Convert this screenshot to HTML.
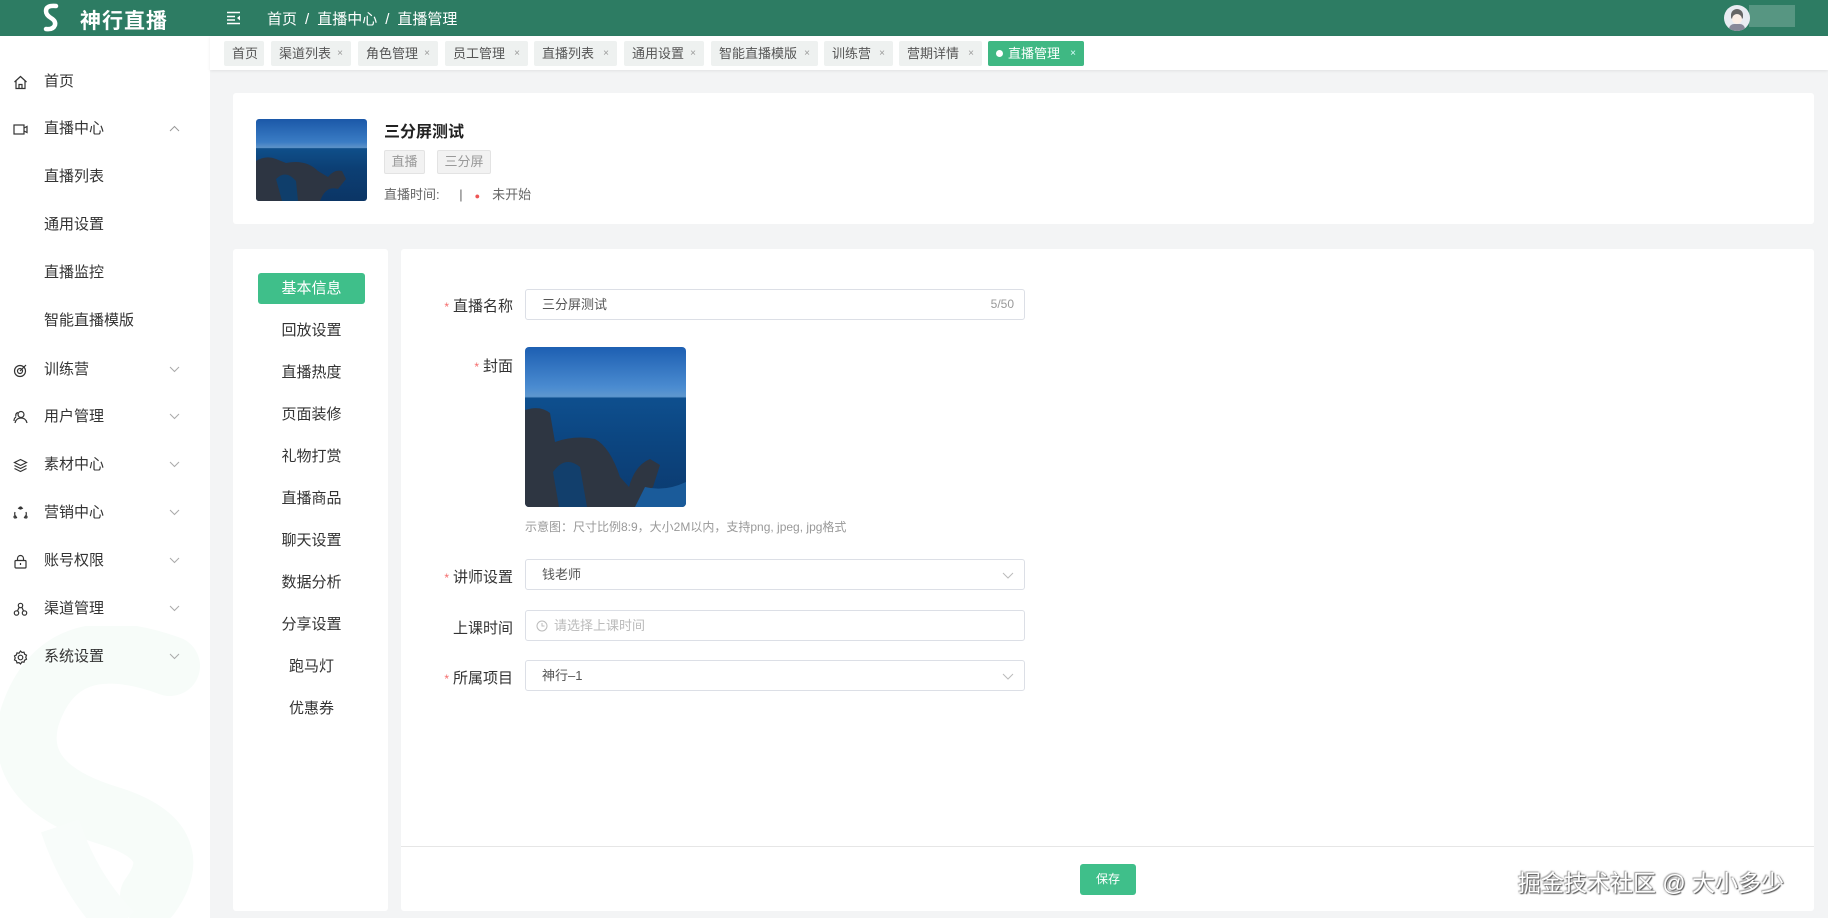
<!DOCTYPE html>
<html><head><meta charset="utf-8">
<style>
*{margin:0;padding:0;box-sizing:border-box}
body{width:1828px;height:918px;overflow:hidden;background:#f3f4f5;font-family:"Liberation Sans","Noto Sans CJK SC",sans-serif;color:#333;position:relative}
.hdr{position:absolute;left:0;top:0;width:1828px;height:36px;background:#2d7c63;color:#fff}
.logo{position:absolute;left:42px;top:3px}
.brand{position:absolute;left:80px;top:5px;font-size:21px;font-weight:bold;letter-spacing:1px}
.bc{position:absolute;left:267px;top:8px;font-size:15px}
.bc span{margin:0 8px}
.side{position:absolute;left:0;top:36px;width:210px;height:882px;background:#fff;overflow:hidden}
.mi{position:absolute;left:0;width:210px;height:24px;font-size:15px;color:#333}
.mi .t{position:absolute;left:44px;top:0;line-height:24px}
.mi svg.ic{position:absolute;left:13px;top:5px}
.mi .ch{position:absolute;left:169px;top:8px}
.tabs{position:absolute;left:210px;top:36px;width:1618px;height:34px;background:#fff;box-shadow:0 1px 3px rgba(0,0,0,.08)}
.tab{position:absolute;top:5px;height:25px;background:#eef1f0;font-size:13px;color:#555;line-height:25px;padding-left:8px;border-radius:2px}
.tab i{font-style:normal;font-size:10px;color:#999;position:absolute;right:8px}
.tab.on{background:#3fb883;color:#fff}
.tab.on i{color:#dff}
.card{position:absolute;background:#fff;border-radius:3px}
.tag{position:absolute;top:150px;height:24px;background:#f2f2f2;border:1px solid #e3e3e3;border-radius:2px;font-size:13px;color:#999;line-height:22px;text-align:center}
.nv{position:absolute;left:258px;width:107px;text-align:center;font-size:15px;color:#333;line-height:31px;height:31px}
.nv.on{background:#3fbf8a;color:#fff;border-radius:3px}
.lab{position:absolute;width:110px;left:403px;text-align:right;font-size:15px;color:#333}
.lab b{color:#f56c6c;font-weight:normal;margin-right:4px;font-size:12px}
.inp{position:absolute;left:525px;width:500px;height:31px;border:1px solid #dcdfe6;border-radius:3px;font-size:13px;color:#555;line-height:29px;padding-left:16px}
.pic{background:linear-gradient(180deg,#1b58a8 0%,#3a7cc4 28%,#5d93c8 35%,#0f4f8a 36%,#0c3f74 60%,#0b3565 100%);overflow:hidden;position:relative}
</style></head><body>
<div class="hdr">
 <svg class="logo" width="18" height="30" viewBox="0 0 18 30"><path d="M14 3 Q4 2 4 8 Q4 12 9 15 Q14 18 13 22 Q11 27 4 26" stroke="#fff" stroke-width="4.5" fill="none" stroke-linecap="round"/></svg>
 <div class="brand">神行直播</div>
 <svg style="position:absolute;left:226px;top:11px" width="16" height="14" viewBox="0 0 16 14"><path d="M1 1.5h13M1 5.5h8M1 9h8M1 12.5h13" stroke="#fff" stroke-width="1.4"/><path d="M14 4.5l-3 2.5 3 2.5z" fill="#fff"/></svg>
 <div class="bc">首页<span>/</span>直播中心<span>/</span>直播管理</div>
 <div style="position:absolute;left:1724px;top:5px;width:26px;height:26px;border-radius:50%;background:#e8ecf2;overflow:hidden"><div style="position:absolute;left:7px;top:4px;width:12px;height:10px;border-radius:6px 6px 2px 2px;background:#666"></div><div style="position:absolute;left:8px;top:9px;width:10px;height:10px;border-radius:50%;background:#fbeee6"></div><div style="position:absolute;left:5px;top:19px;width:16px;height:10px;border-radius:5px;background:#889"></div></div>
 <div style="position:absolute;left:1749px;top:5px;width:46px;height:22px;background:rgba(255,255,255,.2)"></div>
</div>

<div class="side">
 <svg style="position:absolute;left:0;top:590px" width="210" height="300" viewBox="0 0 210 300"><path d="M170 40 Q60 0 30 90 Q10 160 110 190 Q190 215 150 270" stroke="#f7fcf9" stroke-width="60" fill="none" stroke-linecap="round"/><path d="M60 200 Q80 260 120 300" stroke="#f8fcfa" stroke-width="40" fill="none"/></svg>
 <div class="mi" style="top:34px"><svg class="ic" width="15" height="15" viewBox="0 0 15 15" fill="none" stroke="#333" stroke-width="1.2"><path d="M1.5 7 7.5 1.5 13.5 7M3 6v7.5h9V6M6 13.5v-4h3v4"/></svg><span class="t">首页</span></div>
 <div class="mi" style="top:81px"><svg class="ic" width="15" height="15" viewBox="0 0 15 15" fill="none" stroke="#333" stroke-width="1.2"><rect x="1" y="3" width="10" height="9"/><path d="M11 6l3-1.5v6L11 9"/></svg><span class="t">直播中心</span><svg class="ch" width="11" height="7" viewBox="0 0 11 7"><path d="M1 6l4.5-4.5L10 6" stroke="#999" fill="none"/></svg></div>
 <div class="mi" style="top:129px"><span class="t">直播列表</span></div>
 <div class="mi" style="top:177px"><span class="t">通用设置</span></div>
 <div class="mi" style="top:225px"><span class="t">直播监控</span></div>
 <div class="mi" style="top:273px"><span class="t">智能直播模版</span></div>
 <div class="mi" style="top:322px"><svg class="ic" width="15" height="15" viewBox="0 0 15 15" fill="none" stroke="#333" stroke-width="1.2"><circle cx="7" cy="8" r="5.5"/><circle cx="7" cy="8" r="2.5"/><path d="M7 8l6-6"/></svg><span class="t">训练营</span><svg class="ch" width="11" height="7" viewBox="0 0 11 7"><path d="M1 1l4.5 4.5L10 1" stroke="#aaa" fill="none"/></svg></div>
 <div class="mi" style="top:369px"><svg class="ic" width="15" height="15" viewBox="0 0 15 15" fill="none" stroke="#333" stroke-width="1.2"><circle cx="8" cy="4.5" r="3"/><path d="M2 13q1-5 6-5t6 5M5 2.5q-3 1-2 4M1 11q0-3 2-4"/></svg><span class="t">用户管理</span><svg class="ch" width="11" height="7" viewBox="0 0 11 7"><path d="M1 1l4.5 4.5L10 1" stroke="#aaa" fill="none"/></svg></div>
 <div class="mi" style="top:417px"><svg class="ic" width="15" height="15" viewBox="0 0 15 15" fill="none" stroke="#333" stroke-width="1.2"><path d="M7.5 1.5l6 3-6 3-6-3zM1.5 7.5l6 3 6-3M1.5 10.5l6 3 6-3"/></svg><span class="t">素材中心</span><svg class="ch" width="11" height="7" viewBox="0 0 11 7"><path d="M1 1l4.5 4.5L10 1" stroke="#aaa" fill="none"/></svg></div>
 <div class="mi" style="top:465px"><svg class="ic" width="15" height="15" viewBox="0 0 15 15" fill="none" stroke="#333" stroke-width="1.2"><path d="M5 2.5a5.5 5.5 0 0 1 5 0M13 6a5.5 5.5 0 0 1-2 6M4 12a5.5 5.5 0 0 1-2-6"/><circle cx="7.5" cy="2" r="1"/><circle cx="2" cy="11" r="1"/><circle cx="13" cy="11" r="1"/></svg><span class="t">营销中心</span><svg class="ch" width="11" height="7" viewBox="0 0 11 7"><path d="M1 1l4.5 4.5L10 1" stroke="#aaa" fill="none"/></svg></div>
 <div class="mi" style="top:513px"><svg class="ic" width="15" height="15" viewBox="0 0 15 15" fill="none" stroke="#333" stroke-width="1.2"><rect x="2" y="6.5" width="11" height="7.5" rx="1"/><path d="M4.5 6.5V4.5a3 3 0 0 1 6 0v2M7.5 9v2"/></svg><span class="t">账号权限</span><svg class="ch" width="11" height="7" viewBox="0 0 11 7"><path d="M1 1l4.5 4.5L10 1" stroke="#aaa" fill="none"/></svg></div>
 <div class="mi" style="top:561px"><svg class="ic" width="15" height="15" viewBox="0 0 15 15" fill="none" stroke="#333" stroke-width="1.2"><circle cx="7.5" cy="3.5" r="2.2"/><circle cx="3.5" cy="11" r="2.2"/><circle cx="11.5" cy="11" r="2.2"/><path d="M6 5.5 4.5 9M9 5.5l1.5 3.5"/></svg><span class="t">渠道管理</span><svg class="ch" width="11" height="7" viewBox="0 0 11 7"><path d="M1 1l4.5 4.5L10 1" stroke="#aaa" fill="none"/></svg></div>
 <div class="mi" style="top:609px"><svg class="ic" width="15" height="15" viewBox="0 0 15 15" fill="none" stroke="#333" stroke-width="1.2"><path d="M7.5 1l1.5 1.5 2-.3.6 2 1.9 1-.7 2 .7 2-1.9 1-.6 2-2-.3L7.5 14 6 12.6l-2 .3-.6-2-1.9-1 .7-2-.7-2 1.9-1 .6-2 2 .3z"/><circle cx="7.5" cy="7.5" r="2.3"/></svg><span class="t">系统设置</span><svg class="ch" width="11" height="7" viewBox="0 0 11 7"><path d="M1 1l4.5 4.5L10 1" stroke="#aaa" fill="none"/></svg></div>
</div>

<div class="tabs">
 <div class="tab" style="left:14px;width:40px">首页</div>
 <div class="tab" style="left:61px;width:80px">渠道列表<i>×</i></div>
 <div class="tab" style="left:148px;width:80px">角色管理<i>×</i></div>
 <div class="tab" style="left:235px;width:83px">员工管理<i>×</i></div>
 <div class="tab" style="left:324px;width:83px">直播列表<i>×</i></div>
 <div class="tab" style="left:414px;width:80px">通用设置<i>×</i></div>
 <div class="tab" style="left:501px;width:107px">智能直播模版<i>×</i></div>
 <div class="tab" style="left:614px;width:69px">训练营<i>×</i></div>
 <div class="tab" style="left:689px;width:83px">营期详情<i>×</i></div>
 <div class="tab on" style="left:778px;width:96px"><span style="display:inline-block;width:7px;height:7px;border-radius:50%;background:#fff;margin-right:5px;vertical-align:1px"></span>直播管理<i>×</i></div>
</div>

<div class="card" style="left:233px;top:93px;width:1581px;height:131px"></div>
<div class="pic" style="position:absolute;left:256px;top:119px;width:111px;height:82px;border-radius:3px">
 <svg width="111" height="82" viewBox="0 0 111 82" style="position:absolute;left:0;top:0"><path d="M0 42 Q10 36 20 40 L30 44 Q50 40 62 52 L72 58 Q78 50 86 52 L90 60 L82 70 Q70 66 64 82 L0 82z" fill="#2d3542"/><path d="M20 60 Q30 50 40 62 L42 82 L26 82z" fill="#0f3e6b"/></svg>
</div>
<div style="position:absolute;left:384px;top:118px;font-size:16px;font-weight:bold;color:#222">三分屏测试</div>
<div class="tag" style="left:384px;width:41px">直播</div>
<div class="tag" style="left:437px;width:54px">三分屏</div>
<div style="position:absolute;left:384px;top:184px;font-size:13px;color:#666">直播时间: <span style="margin-left:16px">|</span><span style="color:#e55;margin-left:12px;font-size:9px">●</span><span style="margin-left:12px">未开始</span></div>

<div class="card" style="left:233px;top:249px;width:155px;height:662px"></div>
<div class="nv on" style="top:273px">基本信息</div>
<div class="nv" style="top:315px">回放设置</div>
<div class="nv" style="top:357px">直播热度</div>
<div class="nv" style="top:399px">页面装修</div>
<div class="nv" style="top:441px">礼物打赏</div>
<div class="nv" style="top:483px">直播商品</div>
<div class="nv" style="top:525px">聊天设置</div>
<div class="nv" style="top:567px">数据分析</div>
<div class="nv" style="top:609px">分享设置</div>
<div class="nv" style="top:651px">跑马灯</div>
<div class="nv" style="top:693px">优惠券</div>

<div class="card" style="left:401px;top:249px;width:1413px;height:662px"></div>
<div style="position:absolute;left:401px;top:846px;width:1413px;height:1px;background:#e6e6e6"></div>
<div style="position:absolute;left:1080px;top:864px;width:56px;height:31px;background:#3fbf8a;color:#fff;font-size:12px;line-height:31px;text-align:center;border-radius:3px">保存</div>

<div class="lab" style="top:295px"><b>*</b>直播名称</div>
<div class="inp" style="top:289px">三分屏测试<span style="position:absolute;right:10px;color:#999;font-size:12px">5/50</span></div>
<div class="lab" style="top:355px"><b>*</b>封面</div>
<div class="pic" style="position:absolute;left:525px;top:347px;width:161px;height:160px;border-radius:4px;background:linear-gradient(180deg,#1d5fb2 0%,#4a8bd0 25%,#5e98cf 31%,#0e4f8e 32%,#0c4580 60%,#0b3a6e 100%)">
 <svg width="161" height="160" viewBox="0 0 161 160" style="position:absolute;left:0;top:0"><path d="M0 63 Q15 58 25 66 L30 95 Q50 88 70 92 Q85 100 95 130 L104 140 Q110 118 125 112 L135 118 L128 140 Q115 150 112 160 L0 160z" fill="#2e3642"/><path d="M28 125 Q40 108 55 120 L62 160 L34 160z" fill="#123f6c"/><path d="M120 140 Q140 145 161 135 L161 160 L110 160z" fill="#1a5b9a"/></svg>
</div>
<div style="position:absolute;left:525px;top:518px;font-size:12px;color:#999">示意图：尺寸比例8:9，大小2M以内，支持png, jpeg, jpg格式</div>
<div class="lab" style="top:566px"><b>*</b>讲师设置</div>
<div class="inp" style="top:559px">钱老师<svg style="position:absolute;right:10px;top:12px" width="12" height="7" viewBox="0 0 12 7"><path d="M1 1l5 5 5-5" stroke="#bbb" fill="none"/></svg></div>
<div class="lab" style="top:617px">上课时间</div>
<div class="inp" style="top:610px;color:#bbb;padding-left:10px"><svg style="vertical-align:-2px;margin-right:6px" width="12" height="12" viewBox="0 0 12 12" fill="none" stroke="#bbb"><circle cx="6" cy="6" r="5"/><path d="M6 3v3h2.5"/></svg>请选择上课时间</div>
<div class="lab" style="top:667px"><b>*</b>所属项目</div>
<div class="inp" style="top:660px">神行–1<svg style="position:absolute;right:10px;top:12px" width="12" height="7" viewBox="0 0 12 7"><path d="M1 1l5 5 5-5" stroke="#bbb" fill="none"/></svg></div>

<div style="position:absolute;left:1518px;top:864px;font-size:23px;color:#fff;text-shadow:1px 1px 1px #555,-1px -1px 1px #aaa,0 0 2px #777;white-space:nowrap">掘金技术社区 @ 大小多少</div>
</body></html>
